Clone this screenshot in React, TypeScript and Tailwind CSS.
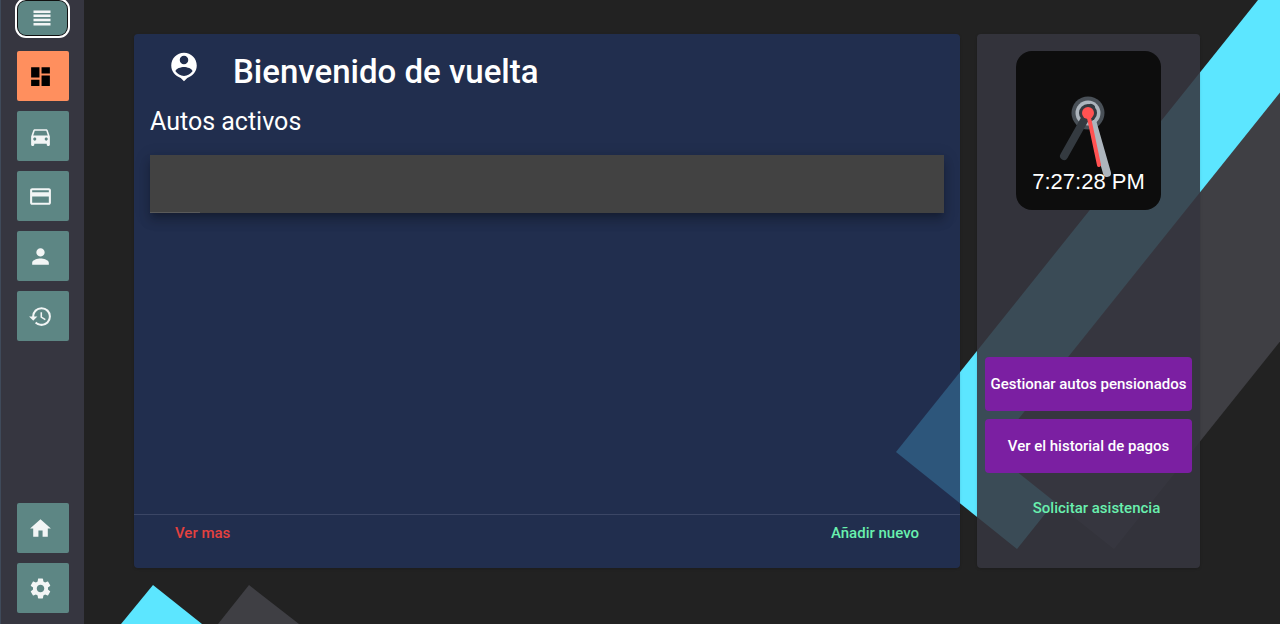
import type { ReactNode } from "react";
import {
  MdCreditCard,
  MdDashboard,
  MdDirectionsCar,
  MdHistory,
  MdHome,
  MdPerson,
  MdSettings,
} from "react-icons/md";

function Backdrop() {
  return (
    <svg
      className="absolute inset-0 h-full w-full"
      viewBox="0 0 1280 624"
      preserveAspectRatio="xMidYMid slice"
      aria-hidden="true"
    >
      <path d="M896 452 1258 0H1456L1017 549Z" fill="#5ce6ff" />
      <path d="M992 452 1354 0H1553L1114 549Z" fill="#3f3f44" />
      <path d="M153 585 121 624H202Z" fill="#5ce6ff" />
      <path d="M249 585 218 624H299Z" fill="#3f3f44" />
    </svg>
  );
}

function MenuIcon() {
  return (
    <svg className="h-6 w-6" viewBox="0 0 24 24" fill="currentColor" aria-hidden="true">
      <path d="M3.5 4.4h17v2.5h-17zM3.5 8.6h17v2.5h-17zM3.5 12.8h17v2.5h-17zM3.5 17h17v2.5h-17z" />
    </svg>
  );
}

function PersonPinIcon() {
  return (
    <svg className="h-[34px] w-[34px]" viewBox="0 0 24 24" fill="currentColor" aria-hidden="true">
      <path
        fillRule="evenodd"
        d="M12 2c-4.97 0-9 4.03-9 9 0 4.17 2.84 7.67 6.69 8.69L12 22l2.31-2.31C18.16 18.67 21 15.17 21 11c0-4.97-4.03-9-9-9zm0 2c1.66 0 3 1.34 3 3s-1.34 3-3 3-3-1.34-3-3 1.34-3 3-3zm0 14.3c-2.5 0-4.71-1.28-6-3.22.03-1.99 4-3.08 6-3.08 1.99 0 5.97 1.09 6 3.08-1.29 1.94-3.5 3.22-6 3.22z"
      />
    </svg>
  );
}

function NavButton({
  label,
  active = false,
  children,
}: {
  label: string;
  active?: boolean;
  children: ReactNode;
}) {
  return (
    <button
      type="button"
      aria-label={label}
      aria-current={active ? "page" : undefined}
      className={
        "flex h-[50px] w-[52px] items-center justify-center rounded-xs pr-1 text-[25px] " +
        (active ? "bg-[#ff8f5e] text-black" : "bg-[#5d8684] text-[#f2f5f5]")
      }
    >
      {children}
    </button>
  );
}

function Sidebar() {
  return (
    <nav
      aria-label="Principal"
      className="relative flex w-[84px] shrink-0 flex-col items-center gap-2.5 border-l border-[#3f4a5a] bg-[#363640] pt-px pb-[11px]"
    >
      <button
        type="button"
        aria-label="Menú"
        className="mb-1.5 flex h-[34px] w-[49px] items-center justify-center rounded-lg bg-[#5d8684] pr-0.5 text-[#f2f5f5] ring-1 ring-[#101010] outline-2 outline-offset-1 outline-white"
      >
        <MenuIcon />
      </button>
      <NavButton label="Panel" active>
        <MdDashboard />
      </NavButton>
      <NavButton label="Autos">
        <MdDirectionsCar />
      </NavButton>
      <NavButton label="Pagos">
        <MdCreditCard />
      </NavButton>
      <NavButton label="Perfil">
        <MdPerson />
      </NavButton>
      <NavButton label="Historial">
        <MdHistory />
      </NavButton>
      <div className="mt-auto flex flex-col gap-2.5">
        <NavButton label="Inicio">
          <MdHome />
        </NavButton>
        <NavButton label="Configuración">
          <MdSettings />
        </NavButton>
      </div>
    </nav>
  );
}

function Clock() {
  return (
    <div className="flex w-[145px] flex-col items-center rounded-2xl bg-[#0d0d0d] pb-[9px]">
      <svg className="h-28 w-full overflow-visible" viewBox="0 0 145 112" aria-hidden="true">
        <circle cx="72" cy="62" r="16.5" fill="#495057" />
        <circle cx="72" cy="62" r="12.5" fill="#adb5bd" />
        <path d="M75 66 91 122" stroke="#adb5bd" strokeWidth="8" strokeLinecap="round" />
        <circle cx="72" cy="62" r="9" fill="#343a40" />
        <path d="M75 57 48 105" stroke="#343a40" strokeWidth="8" strokeLinecap="round" />
        <path d="M72 62 83 114" stroke="#ff5252" strokeWidth="4" strokeLinecap="round" />
        <circle cx="72" cy="62" r="6" fill="#ff5252" />
      </svg>
      <time className="font-['Liberation_Sans',sans-serif] text-[22px] leading-[38px] text-white">
        7:27:28 PM
      </time>
    </div>
  );
}

export default function App() {
  return (
    <div className="relative flex min-h-screen overflow-hidden bg-[#222222] font-[Roboto,sans-serif] text-white">
      <Backdrop />
      <Sidebar />
      <main className="relative flex flex-1 gap-[17px] pt-[34px] pr-20 pb-14 pl-[50px]">
        <section className="flex flex-1 flex-col rounded bg-[#22325a]/80 shadow">
          <header className="flex items-start gap-8 px-[33px] pt-4">
            <PersonPinIcon />
            <h1 className="text-[33px] leading-[44px] font-medium">Bienvenido de vuelta</h1>
          </header>
          <div className="px-4 pt-[9px]">
            <h2 className="text-[25px] leading-[38px]">Autos activos</h2>
            <div className="mt-3.5 flex h-[58px] items-end bg-[#424242] shadow-[0_5px_5px_-3px_rgba(0,0,0,0.2),0_8px_10px_1px_rgba(0,0,0,0.14),0_3px_14px_2px_rgba(0,0,0,0.12)]">
              <div className="h-px w-[50px] bg-[#5a5a5a]" />
            </div>
          </div>
          <footer className="mt-auto flex items-start justify-between border-t border-[#3b4665] px-[41px] pt-[9px] pb-[26px] text-[15px] leading-[18px] font-medium">
            <button type="button" className="text-[#e5413e]">
              Ver mas
            </button>
            <button type="button" className="text-[#69f0ae]">
              Añadir nuevo
            </button>
          </footer>
        </section>
        <aside className="flex w-[223px] shrink-0 flex-col items-center rounded bg-[#36363f]/88 px-2 pt-[17px] shadow">
          <Clock />
          <div className="mt-auto flex w-full flex-col gap-2 pb-[33px] text-[15px] font-medium">
            <button type="button" className="h-[54px] rounded bg-[#7b1fa2]">
              Gestionar autos pensionados
            </button>
            <button type="button" className="h-[54px] rounded bg-[#7b1fa2]">
              Ver el historial de pagos
            </button>
            <button type="button" className="h-[54px] pl-4 text-[#69f0ae]">
              Solicitar asistencia
            </button>
          </div>
        </aside>
      </main>
    </div>
  );
}
